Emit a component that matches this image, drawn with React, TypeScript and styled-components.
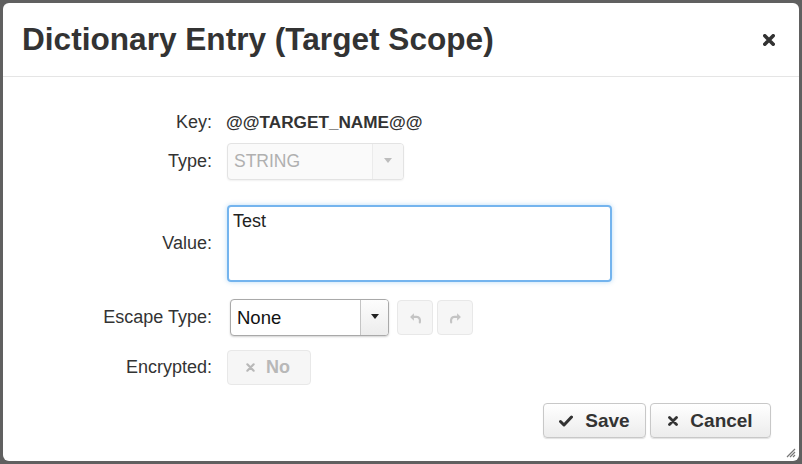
import React from 'react';
import styled, { createGlobalStyle } from 'styled-components';

const GlobalStyle = createGlobalStyle`
  html, body {
    margin: 0;
    padding: 0;
    background: #5f5f5f;
  }
  * {
    box-sizing: border-box;
  }
`

const Backdrop = styled.div`
  width: 802px;
  height: 464px;
  padding: 3px;
  background: #606060;
  font-family: "Liberation Sans", Arial, sans-serif;
`

const Dialog = styled.div`
  position: relative;
  width: 100%;
  height: 100%;
  background: #fff;
  border-radius: 6px;
  display: flex;
  flex-direction: column;
`

const Header = styled.div`
  height: 74px;
  display: flex;
  align-items: center;
  justify-content: space-between;
  padding: 0 23px 0 19px;
  border-bottom: 1px solid #e5e5e5;
`

const Title = styled.h1`
  margin: 0;
  font-size: 31.6px;
  font-weight: 700;
  color: #333;
`

const Close = styled.button`
  border: none;
  background: none;
  padding: 0;
  width: 14px;
  height: 14px;
  display: flex;
  align-items: center;
  justify-content: center;
  cursor: pointer;
`

const Body = styled.div`
  flex: 1;
  padding-top: 33px;
`

const Row = styled.div<{ $mt?: number }>`
  display: grid;
  grid-template-columns: 209px 1fr;
  column-gap: 15px;
  align-items: center;
  margin-top: ${p => p.$mt ?? 0}px;
`

const Label = styled.div`
  text-align: right;
  font-size: 18px;
  color: #333;
`

const KeyValue = styled.div`
  font-size: 17.2px;
  font-weight: 700;
  color: #333;
  line-height: 24px;
  margin-left: -1px;
`

const Select = styled.div<{ $disabled?: boolean; $width: number }>`
  display: flex;
  width: ${p => p.$width}px;
  height: 37px;
  border: 1px solid ${p => (p.$disabled ? '#e3e3e3' : '#a9a9a9')};
  border-radius: 4px;
  background: ${p => (p.$disabled ? '#fafafa' : '#fff')};
  box-shadow: 0 1px 2px rgba(0, 0, 0, ${p => (p.$disabled ? 0.06 : 0.18)});
  overflow: hidden;
`

const SelectText = styled.div<{ $disabled?: boolean }>`
  flex: 1;
  display: flex;
  align-items: center;
  padding-left: 6px;
  font-size: ${p => (p.$disabled ? 17.5 : 18.5)}px;
  color: ${p => (p.$disabled ? '#b0b0b0' : '#111')};
`

const SelectToggle = styled.div<{ $disabled?: boolean }>`
  width: ${p => (p.$disabled ? 31 : 28)}px;
  display: flex;
  align-items: center;
  justify-content: center;
  border-left: 1px solid ${p => (p.$disabled ? '#ebebeb' : '#c4c4c4')};
  background: ${p =>
    p.$disabled ? '#f7f7f7' : 'linear-gradient(#fdfdfd, #ececec)'};
`

const Caret = styled.span<{ $color: string }>`
  width: 0;
  height: 0;
  border-left: 4.5px solid transparent;
  border-right: 4.5px solid transparent;
  border-top: 5px solid ${p => p.$color};
  margin-top: -2px;
`

const TextArea = styled.div`
  width: 385px;
  height: 77px;
  border: 2px solid #74b4ee;
  border-radius: 4px;
  box-shadow: 0 0 5px rgba(102, 175, 233, 0.45);
  padding: 4px 4px;
  font-size: 18px;
  color: #222;
`

const Inline = styled.div<{ $ml?: number }>`
  display: flex;
  align-items: center;
  gap: 4px;
  margin-left: ${p => p.$ml ?? 0}px;
`

const IconButton = styled.button`
  width: 36px;
  height: 35px;
  display: flex;
  align-items: center;
  justify-content: center;
  background: #f6f6f6;
  border: 1px solid #e8e8e8;
  border-radius: 4px;
  padding: 0;
`

const ToggleButton = styled.button`
  width: 84px;
  height: 35px;
  display: flex;
  align-items: center;
  justify-content: center;
  gap: 11px;
  background: #f6f6f6;
  border: 1px solid #e8e8e8;
  border-radius: 4px;
  font-family: inherit;
  font-size: 18px;
  font-weight: 700;
  color: #b8b8b8;
  padding: 0 2px 0 0;
`

const Footer = styled.div`
  display: flex;
  justify-content: flex-end;
  gap: 4px;
  padding: 0 28px 0 0;
  margin-top: 18px;
`

const ActionButton = styled.button<{ $width: number }>`
  width: ${p => p.$width}px;
  height: 35px;
  display: flex;
  align-items: center;
  justify-content: center;
  gap: 12px;
  background: linear-gradient(#ffffff, #ececec);
  border: 1px solid #c8c8c8;
  border-radius: 4px;
  box-shadow: 0 1px 1px rgba(0, 0, 0, 0.12);
  font-family: inherit;
  font-size: 19px;
  font-weight: 700;
  color: #333;
  padding: 0;
`

const Grip = styled.svg`
  position: absolute;
  right: 3px;
  bottom: 3px;
`

const Times = ({ size = 10, color = '#333', stroke = 2.6 }: { size?: number; color?: string; stroke?: number }) => (
  <svg width={size} height={size} viewBox="0 0 10 10">
    <path d="M1.5 1.5 L8.5 8.5 M8.5 1.5 L1.5 8.5" stroke={color} strokeWidth={stroke} strokeLinecap="round" />
  </svg>
)

const Check = () => (
  <svg width="14" height="12" viewBox="0 0 14 12">
    <path d="M1.5 6.5 L5 10 L12.5 2" stroke="#333" strokeWidth="3" fill="none" strokeLinecap="round" strokeLinejoin="round" />
  </svg>
)

const UndoIcon = ({ flip }: { flip?: boolean }) => (
  <svg width="13" height="12" viewBox="0 0 12 11" style={flip ? { transform: 'scaleX(-1)' } : undefined}>
    <path d="M4.5 1 L1 4.5 L4.5 8 Z" fill="#c4c4c4" />
    <path d="M3.5 4.5 H7 C9.5 4.5 10.5 6.5 10 9.5" stroke="#c4c4c4" strokeWidth="2" fill="none" strokeLinecap="round" />
  </svg>
)

export default function App() {
  return (
    <>
      <GlobalStyle />
      <Backdrop>
        <Dialog>
          <Header>
            <Title>Dictionary Entry (Target Scope)</Title>
            <Close aria-label="Close">
              <Times size={12} stroke={3} />
            </Close>
          </Header>
          <Body>
            <Row>
              <Label>Key:</Label>
              <KeyValue>@@TARGET_NAME@@</KeyValue>
            </Row>
            <Row $mt={9}>
              <Label>Type:</Label>
              <Select $disabled $width={177}>
                <SelectText $disabled>STRING</SelectText>
                <SelectToggle $disabled>
                  <Caret $color="#bdbdbd" />
                </SelectToggle>
              </Select>
            </Row>
            <Row $mt={25}>
              <Label>Value:</Label>
              <TextArea>Test</TextArea>
            </Row>
            <Row $mt={17}>
              <Label>Escape Type:</Label>
              <Inline $ml={3}>
                <Select $width={159}>
                  <SelectText>None</SelectText>
                  <SelectToggle>
                    <Caret $color="#222" />
                  </SelectToggle>
                </Select>
                <IconButton style={{ marginLeft: 4 }} aria-label="Undo">
                  <UndoIcon />
                </IconButton>
                <IconButton aria-label="Redo">
                  <UndoIcon flip />
                </IconButton>
              </Inline>
            </Row>
            <Row $mt={14}>
              <Label>Encrypted:</Label>
              <Inline>
                <ToggleButton>
                  <Times size={9} color="#b8b8b8" stroke={2.4} />
                  No
                </ToggleButton>
              </Inline>
            </Row>
            <Footer>
              <ActionButton $width={103}>
                <Check />
                Save
              </ActionButton>
              <ActionButton $width={121}>
                <Times size={10} stroke={2.8} />
                Cancel
              </ActionButton>
            </Footer>
          </Body>
          <Grip width="12" height="12" viewBox="0 0 12 12">
            <path d="M11 3 L3 11 M11 6 L6 11 M11 9 L9 11" stroke="#777" strokeWidth="1.2" />
          </Grip>
        </Dialog>
      </Backdrop>
    </>
  )
}
